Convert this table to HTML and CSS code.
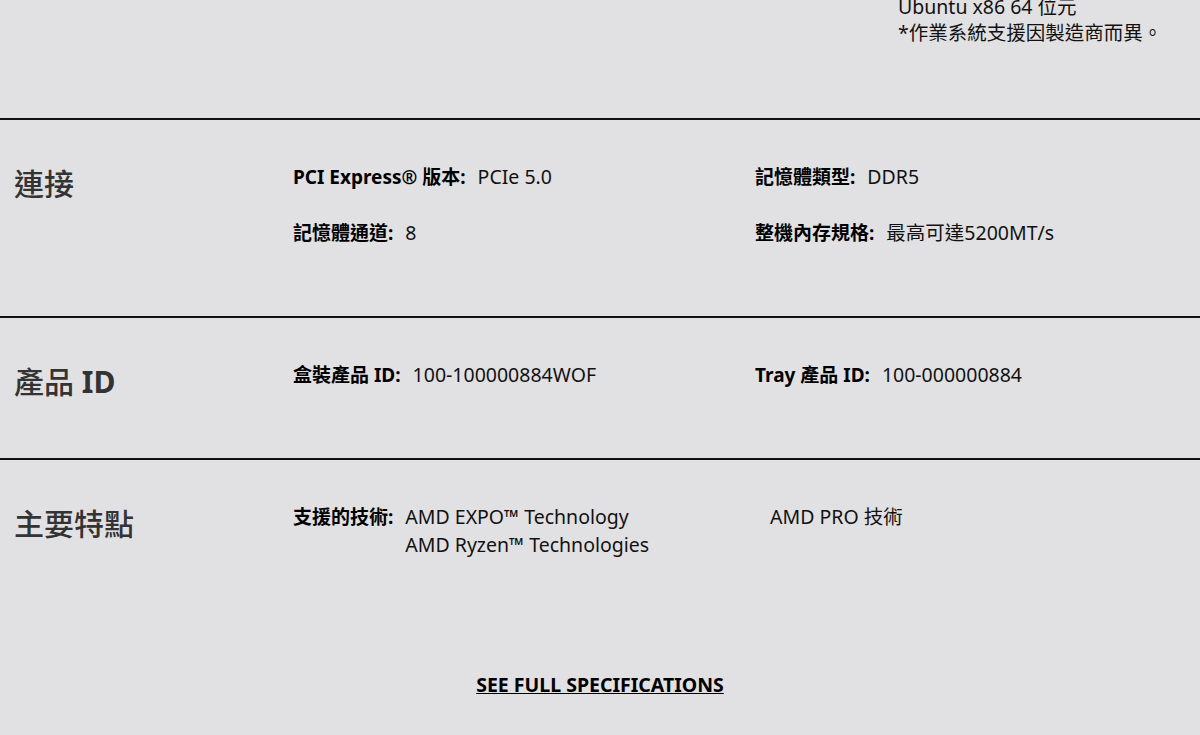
FILE: index.html
```html
<!DOCTYPE html>
<html>

<head>
  <title>Specifications</title>
  <link rel="stylesheet" href="styles.css">
</head>

<body>
  <main class="specs">
    <section class="spec spec-top">
      <div class="spec-title"></div>
      <div class="spec-grid three">
        <div></div>
        <div></div>
        <div class="os-list">
          <div>Ubuntu x86 64 位元</div>
          <div>*作業系統支援因製造商而異。</div>
        </div>
      </div>
    </section>

    <section class="spec">
      <h3 class="spec-title">連接</h3>
      <div class="spec-grid">
        <div class="spec-item">
          <span class="spec-label">PCI Express® 版本:</span>
          <span class="spec-value">PCIe 5.0</span>
        </div>
        <div class="spec-item">
          <span class="spec-label">記憶體類型:</span>
          <span class="spec-value">DDR5</span>
        </div>
        <div class="spec-item">
          <span class="spec-label">記憶體通道:</span>
          <span class="spec-value">8</span>
        </div>
        <div class="spec-item">
          <span class="spec-label">整機內存規格:</span>
          <span class="spec-value">最高可達5200MT/s</span>
        </div>
      </div>
    </section>

    <section class="spec">
      <h3 class="spec-title">產品 <b>ID</b></h3>
      <div class="spec-grid">
        <div class="spec-item">
          <span class="spec-label">盒裝產品 ID:</span>
          <span class="spec-value">100-100000884WOF</span>
        </div>
        <div class="spec-item">
          <span class="spec-label">Tray 產品 ID:</span>
          <span class="spec-value">100-000000884</span>
        </div>
      </div>
    </section>

    <section class="spec spec-last">
      <h3 class="spec-title">主要特點</h3>
      <div class="spec-grid">
        <div class="spec-item">
          <span class="spec-label">支援的技術:</span>
          <span class="spec-value">
            <span>AMD EXPO™ Technology</span>
            <span>AMD Ryzen™ Technologies</span>
          </span>
        </div>
        <div class="spec-item no-label">
          <span class="spec-value">AMD PRO 技術</span>
        </div>
      </div>
    </section>

    <div class="full-link">
      <a href="#">SEE FULL SPECIFICATIONS</a>
    </div>
  </main>
</body>

</html>
```

FILE: styles.css
```css
body {
  margin: 0;
  background-color: #e1e1e3;
  color: #111;
  font-family: "Noto Sans", "Noto Sans CJK TC", sans-serif;
  font-size: 19px;
  overflow: hidden;
}

.spec {
  display: grid;
  grid-template-columns: 279px 1fr;
  padding: 43px 0 69px 14px;
  border-top: 2px solid #111;
}

.spec-top {
  border-top: none;
  margin-top: -6px;
  padding-top: 0;
  padding-bottom: 72px;
}

.spec-title {
  margin: 7px 0 -7px;
  font-size: 30px;
  line-height: 28px;
  font-weight: 500;
  color: #333;
}

.spec-title b {
  font-weight: 700;
}

.spec-grid {
  display: grid;
  grid-template-columns: 462px 1fr;
  row-gap: 28px;
  line-height: 28px;
  align-items: start;
}

.spec-grid.three {
  grid-template-columns: 303px 302px 1fr;
}

.os-list {
  font-size: 19.5px;
  line-height: 26px;
}

.spec-item {
  display: flex;
  gap: 12px;
}

.spec-item.no-label {
  padding-left: 15px;
}

.spec-label {
  font-weight: 700;
  color: #000;
}

.spec-value {
  display: flex;
  flex-direction: column;
  font-size: 19.5px;
}

.full-link {
  margin-top: 43px;
  text-align: center;
  line-height: 28px;
}

.full-link a {
  color: #000;
  font-size: 19.5px;
  font-weight: 700;
  text-decoration: underline;
}
```
